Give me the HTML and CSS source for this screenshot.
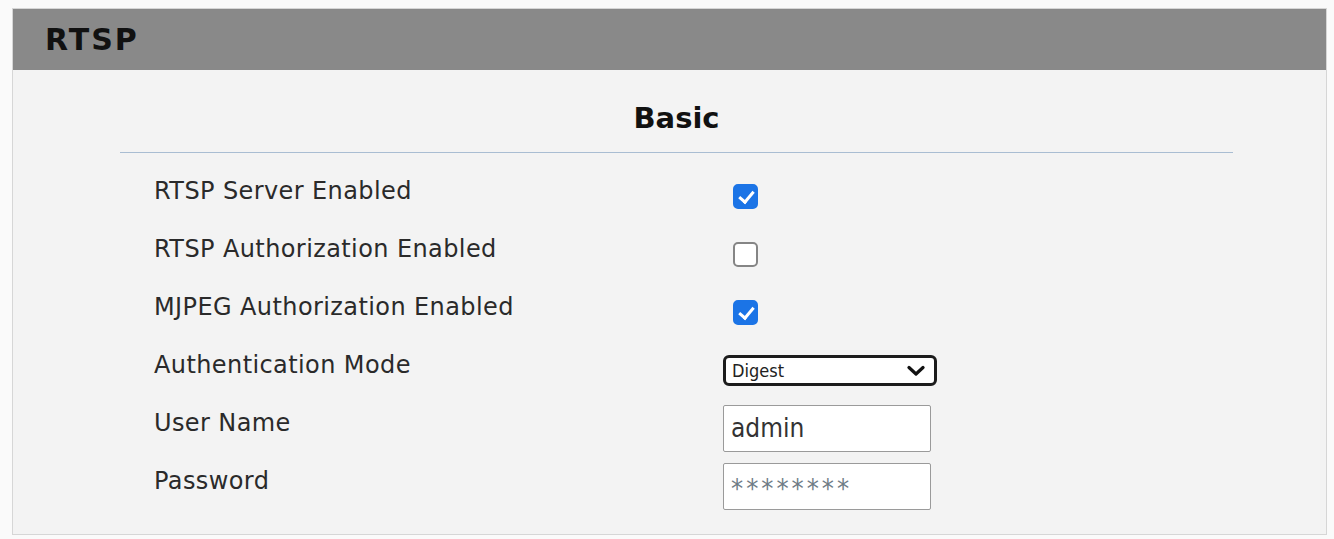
FILE: index.html
```html
<!DOCTYPE html>
<html lang="en">
<head>
<meta charset="utf-8">
<title>RTSP</title>
<link rel="stylesheet" href="styles.css">
</head>
<body>
  <section class="panel">
    <header class="panel-head">RTSP</header>
    <div class="panel-body">
      <h2 class="group-title">Basic</h2>
      <div class="group-rule"></div>
      <form class="form">
        <div class="row">
          <span class="label">RTSP Server Enabled</span>
          <span class="control"><input class="check" type="checkbox" checked></span>
        </div>
        <div class="row">
          <span class="label">RTSP Authorization Enabled</span>
          <span class="control"><input class="check" type="checkbox"></span>
        </div>
        <div class="row">
          <span class="label">MJPEG Authorization Enabled</span>
          <span class="control"><input class="check" type="checkbox" checked></span>
        </div>
        <div class="row">
          <span class="label">Authentication Mode</span>
          <span class="control">
            <span class="select-wrap">
              <select class="select">
                <option>Digest</option>
                <option>Basic</option>
              </select>
              <svg class="chevron" width="18" height="12" viewBox="0 0 18 12"><path d="M2 2.5 L9 9 L16 2.5" fill="none" stroke="#111" stroke-width="3.2" stroke-linecap="round" stroke-linejoin="round"/></svg>
            </span>
          </span>
        </div>
        <div class="row">
          <span class="label">User Name</span>
          <span class="control"><input class="text" type="text" value="admin"></span>
        </div>
        <div class="row">
          <span class="label">Password</span>
          <span class="control"><input class="text pass" type="text" value="********"></span>
        </div>
      </form>
    </div>
  </section>
</body>
</html>
```
FILE: styles.css
```css
html, body {
  margin: 0;
  padding: 0;
}

body {
  background: #fafafa;
  font-family: "DejaVu Sans", sans-serif;
  color: #222;
}

.panel {
  margin: 8px 7px 0 12px;
  border: 1px solid #d6d6d6;
  background: #f3f3f3;
  height: 527px;
  box-sizing: border-box;
  display: flex;
  flex-direction: column;
}

.panel-head {
  height: 61px;
  background: #898989;
  display: flex;
  align-items: center;
  padding-left: 32px;
  font-family: "DejaVu Sans", sans-serif;
  font-weight: bold;
  font-size: 30px;
  color: #111;
  letter-spacing: 2px;
}

.panel-body {
  display: flex;
  flex-direction: column;
}

.group-title {
  margin: 0;
  padding-top: 33px;
  padding-left: 14px;
  height: 52px;
  box-sizing: border-box;
  text-align: center;
  font-family: "DejaVu Sans", sans-serif;
  font-weight: bold;
  font-size: 29px;
  line-height: 30px;
  color: #111;
}

.group-rule {
  margin: 30px 93px 0 107px;
  height: 1px;
  background: #a9bdd2;
}

.form {
  margin: 14px 0 0 0;
  display: flex;
  flex-direction: column;
}

.row {
  display: grid;
  grid-template-columns: 569px auto;
  height: 58px;
  align-items: center;
  padding-left: 141px;
}

.label {
  font-size: 24px;
  color: #2a2a2a;
  padding-bottom: 10px;
  white-space: nowrap;
  letter-spacing: 0.4px;
}

.control {
  display: flex;
  align-items: center;
}

.check {
  appearance: none;
  -webkit-appearance: none;
  margin: 0 0 0 10px;
  width: 25px;
  height: 25px;
  box-sizing: border-box;
  border: 2px solid #858585;
  border-radius: 5px;
  background: #fff;
  position: relative;
}

.check:checked {
  background: #1b74e6;
  border-color: #1b74e6;
}

.check:checked::after {
  content: "";
  position: absolute;
  left: 7px;
  top: 2px;
  width: 6px;
  height: 12px;
  border: solid #fff;
  border-width: 0 3px 3px 0;
  transform: rotate(40deg);
}

.select-wrap {
  position: relative;
  display: inline-flex;
}

.select {
  appearance: none;
  -webkit-appearance: none;
  width: 214px;
  height: 31px;
  box-sizing: border-box;
  border: 3px solid #1c1c1c;
  border-radius: 6px;
  background: #fff;
  padding: 0 0 0 6px;
  font-family: "DejaVu Sans Condensed", "DejaVu Sans", sans-serif;
  font-size: 18px;
  color: #222;
}

.chevron {
  position: absolute;
  right: 12px;
  top: 10px;
  pointer-events: none;
}

.text {
  width: 208px;
  height: 47px;
  box-sizing: border-box;
  border: 1px solid #9a9a9a;
  border-radius: 2px;
  background: #fff;
  padding: 0 0 0 7px;
  margin: 0;
  font-family: "DejaVu Sans Condensed", "DejaVu Sans", sans-serif;
  font-size: 26px;
  color: #333;
}

.pass {
  color: #6f7c86;
  font-size: 27px;
  letter-spacing: 3px;
  padding-top: 4px;
}
```
